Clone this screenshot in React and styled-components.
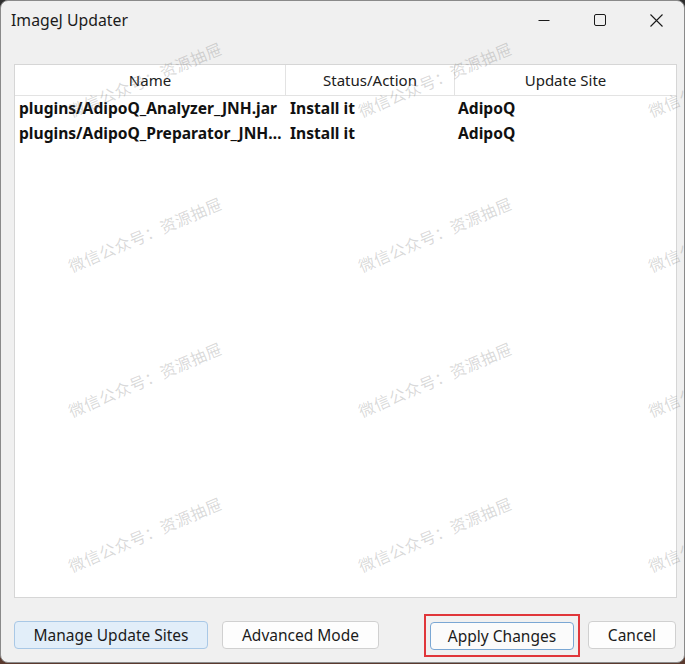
import React from "react";
import styled, { createGlobalStyle } from "styled-components";

const Global = createGlobalStyle`
  html, body { margin: 0; padding: 0; }
  body {
    width: 685px;
    height: 664px;
    overflow: hidden;
    background: linear-gradient(180deg, #2e2e2e 0%, #3a3230 60%, #5b3a2e 100%);
    font-family: "Noto Sans", "Liberation Sans", sans-serif;
  }
`;

const Window = styled.div`
  position: relative;
  box-sizing: border-box;
  width: 685px;
  height: 663px;
  background: #f0f0f0;
  border: 1px solid #8a8a8a;
  border-radius: 8px;
  display: flex;
  flex-direction: column;
  overflow: hidden;
`;

const TitleBar = styled.div`
  height: 38px;
  display: flex;
  align-items: center;
  flex-shrink: 0;
`;

const Title = styled.div`
  flex: 1;
  padding-left: 10px;
  font-size: 15.8px;
  color: #1b1b1b;
`;

const Control = styled.div`
  width: 56px;
  height: 38px;
  display: flex;
  align-items: center;
  justify-content: center;
  color: #1a1a1a;
`;

const Body = styled.div`
  flex: 1;
  display: flex;
  flex-direction: column;
  padding: 25px 7px 0 13px;
`;

const Table = styled.div`
  height: 532px;
  background: #ffffff;
  border: 1px solid #d6d6d6;
  display: flex;
  flex-direction: column;
`;

const Grid = styled.div`
  display: grid;
  grid-template-columns: 271px 169px 1fr;
`;

const HeadCell = styled.div`
  height: 30px;
  display: flex;
  align-items: center;
  justify-content: center;
  font-size: 15px;
  color: #202020;
  border-bottom: 1px solid #e3e3e3;
  border-right: ${(p) => (p.$last ? "none" : "1px solid #e3e3e3")};
`;

const Cell = styled.div`
  height: 25px;
  line-height: 25px;
  padding-left: ${(p) => p.$pad || 4}px;
  padding-right: 4px;
  font-size: 15.6px;
  font-weight: 700;
  color: #111111;
  white-space: nowrap;
  overflow: hidden;
  text-overflow: ellipsis;
`;

const ButtonBar = styled.div`
  height: 65px;
  display: flex;
  align-items: center;
  padding: 9px 1px 0 0;
  box-sizing: border-box;
`;

const Button = styled.button`
  height: 28px;
  box-sizing: border-box;
  width: ${(p) => p.$w}px;
  margin-right: ${(p) => p.$mr || 0}px;
  border-radius: 4px;
  border: 1px solid ${(p) => p.$border || "#d0d0d0"};
  background: ${(p) => p.$bg || "#fdfdfd"};
  font-family: "Noto Sans", "Liberation Sans", sans-serif;
  font-size: 15.5px;
  color: #1b1b1b;
  padding: 0;
`;

/* red annotation frame drawn around the primary action */
const Highlight = styled.div`
  display: flex;
  border: 2px solid #e0363a;
  padding: 6px 4px 5px;
  margin-right: 8px;
`;

const Spacer = styled.div`
  flex: 1;
`;

const Watermarks = styled.div`
  position: absolute;
  inset: 0;
  pointer-events: none;
`;

const Mark = styled.span`
  position: absolute;
  white-space: nowrap;
  font-family: "Noto Sans CJK SC", sans-serif;
  font-size: 16px;
  letter-spacing: 0.5px;
  color: rgba(120, 120, 120, 0.28);
  transform: translate(-50%, -50%) rotate(-23deg);
`;

const rows = [
  ["plugins/AdipoQ_Analyzer_JNH.jar", "Install it", "AdipoQ"],
  ["plugins/AdipoQ_Preparator_JNH.jar", "Install it", "AdipoQ"],
];

const markSpots = [];
[144, 434, 724].forEach((x) => {
  [78, 233, 378, 533].forEach((y) => markSpots.push([x, y]));
});

export default function App() {
  return (
    <>
      <Global />
      <Window>
        <TitleBar>
          <Title>ImageJ Updater</Title>
          <Control>
            <svg width="12" height="12" viewBox="0 0 12 12">
              <line x1="0.5" y1="6.5" x2="11.5" y2="6.5" stroke="currentColor" strokeWidth="1" />
            </svg>
          </Control>
          <Control>
            <svg width="12" height="12" viewBox="0 0 12 12">
              <rect x="0.5" y="0.5" width="11" height="11" rx="1.5" fill="none" stroke="currentColor" strokeWidth="1" />
            </svg>
          </Control>
          <Control>
            <svg width="13" height="13" viewBox="0 0 13 13">
              <path d="M0.5 0.5 L12.5 12.5 M12.5 0.5 L0.5 12.5" stroke="currentColor" strokeWidth="1.1" />
            </svg>
          </Control>
        </TitleBar>
        <Body>
          <Table>
            <Grid>
              <HeadCell>Name</HeadCell>
              <HeadCell>Status/Action</HeadCell>
              <HeadCell $last>Update Site</HeadCell>
              {rows.map((r, i) => (
                <React.Fragment key={i}>
                  <Cell $pad={4}>{r[0]}</Cell>
                  <Cell $pad={4}>{r[1]}</Cell>
                  <Cell $pad={3}>{r[2]}</Cell>
                </React.Fragment>
              ))}
            </Grid>
          </Table>
          <ButtonBar>
            <Button $w={194} $mr={14} $bg="#e2eef9" $border="#a9c8e6">
              Manage Update Sites
            </Button>
            <Button $w={157}>Advanced Mode</Button>
            <Spacer />
            <Highlight>
              <Button $w={144} $bg="#fbfbfb" $border="#7aa7d4">
                Apply Changes
              </Button>
            </Highlight>
            <Button $w={88}>Cancel</Button>
          </ButtonBar>
        </Body>
        <Watermarks>
          {markSpots.map(([x, y], i) => (
            <Mark key={i} style={{ left: x, top: y }}>
              微信公众号：资源抽屉
            </Mark>
          ))}
        </Watermarks>
      </Window>
    </>
  );
}
